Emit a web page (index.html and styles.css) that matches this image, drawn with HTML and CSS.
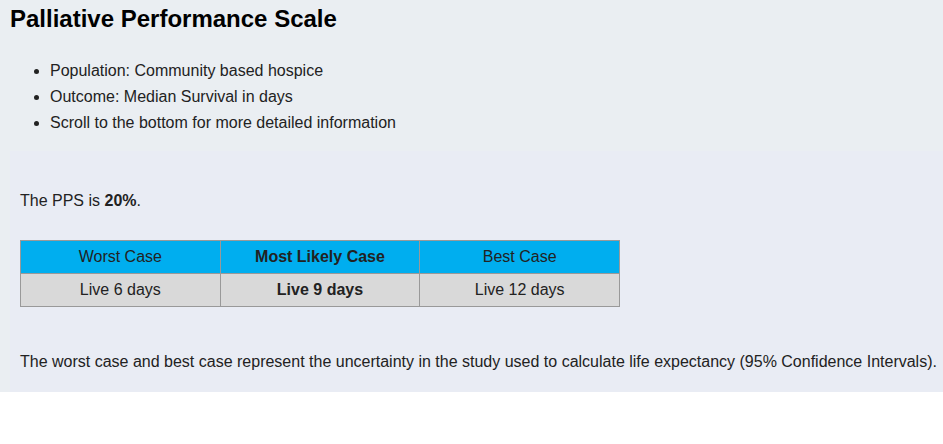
FILE: index.html
```html
<!DOCTYPE html>
<html>
<head>
<meta charset="utf-8">
<link rel="stylesheet" href="styles.css">
</head>
<body>
<div class="page">
  <h1 class="title">Palliative Performance Scale</h1>
  <ul class="facts">
    <li>Population: Community based hospice</li>
    <li>Outcome: Median Survival in days</li>
    <li>Scroll to the bottom for more detailed information</li>
  </ul>
  <div class="result">
    <p class="pps">The PPS is <b>20%</b>.</p>
    <table class="cases">
      <tr class="head">
        <td>Worst Case</td>
        <td class="likely">Most Likely Case</td>
        <td>Best Case</td>
      </tr>
      <tr class="vals">
        <td>Live 6 days</td>
        <td class="likely">Live 9 days</td>
        <td>Live 12 days</td>
      </tr>
    </table>
    <p class="note">The worst case and best case represent the uncertainty in the study used to calculate life expectancy (95% Confidence Intervals).</p>
  </div>
</div>
</body>
</html>
```

FILE: styles.css
```css
html, body {
  margin: 0;
  padding: 0;
  background: #ffffff;
}
body {
  font-family: "Liberation Sans", Arial, sans-serif;
  color: #222;
}
.page {
  background: #eaeef2;
  padding: 5px 0 0 10px;
}
.title {
  margin: 0;
  font-size: 24px;
  line-height: 27px;
  color: #000;
}
.facts {
  margin: 26px 0 15px 0;
  padding-left: 40px;
  font-size: 16px;
  line-height: 26px;
}
.result {
  background: #e9ecf4;
  padding: 38px 10px 18px 10px;
  white-space: nowrap;
}
.pps {
  margin: 0 0 27px 0;
  font-size: 16px;
  line-height: 24px;
}
.cases {
  border-collapse: collapse;
  width: 600px;
  table-layout: fixed;
  font-size: 16px;
}
.cases td {
  border: 1px solid #999;
  text-align: center;
  height: 32px;
  padding: 0;
}
.head td {
  background: #00aeef;
}
.vals td {
  background: #d9d9d9;
}
.likely {
  font-weight: bold;
}
.note {
  margin: 43px 0 0 0;
  font-size: 16px;
  line-height: 24px;
}
```
